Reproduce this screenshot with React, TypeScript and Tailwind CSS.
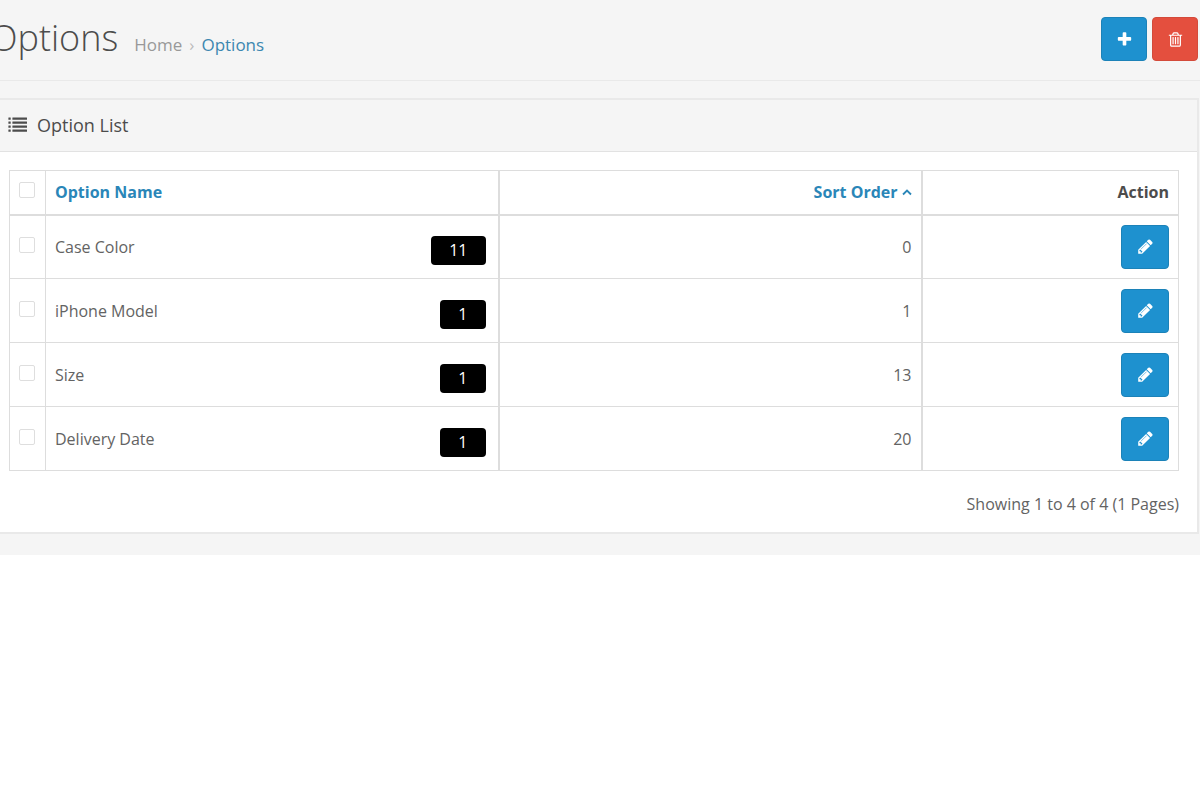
import type { ReactNode } from "react";

const options = [
  { name: "Case Color", values: 11, sortOrder: 0 },
  { name: "iPhone Model", values: 1, sortOrder: 1 },
  { name: "Size", values: 1, sortOrder: 13 },
  { name: "Delivery Date", values: 1, sortOrder: 20 },
];

const icons = {
  plus: "M1600 736v192q0 40-28 68t-68 28h-416v416q0 40-28 68t-68 28h-192q-40 0-68-28t-28-68v-416h-416q-40 0-68-28t-28-68v-192q0-40 28-68t68-28h416v-416q0-40 28-68t68-28h192q40 0 68 28t28 68v416h416q40 0 68 28t28 68z",
  trash:
    "M704 1376v-704q0-14-9-23t-23-9h-64q-14 0-23 9t-9 23v704q0 14 9 23t23 9h64q14 0 23-9t9-23zm256 0v-704q0-14-9-23t-23-9h-64q-14 0-23 9t-9 23v704q0 14 9 23t23 9h64q14 0 23-9t9-23zm256 0v-704q0-14-9-23t-23-9h-64q-14 0-23 9t-9 23v704q0 14 9 23t23 9h64q14 0 23-9t9-23zm128 84v-948h-896v948q0 22 7 40.500t14.500 27 10.500 8.500h832q3 0 10.500-8.500t14.500-27 7-40.500zm-672-1076h448l-48-117q-7-9-17-11h-317q-10 2-17 11zm928 32v64q0 14-9 23t-23 9h-96v948q0 83-47 143.500t-113 60.500h-832q-66 0-113-58.500t-47-141.500v-952h-96q-14 0-23-9t-9-23v-64q0-14 9-23t23-9h309l70-167q15-37 54-63t79-26h320q40 0 79 26t54 63l70 167h309q14 0 23 9t9 23z",
  pencil:
    "M491 1536l91-91-235-235-91 91v107h128v128h107zm523-928q0-22-22-22-10 0-17 7l-542 542q-7 7-7 17 0 22 22 22 10 0 17-7l542-542q7-7 7-17zm-54-192l416 416-832 832h-416v-416zm683 96q0 53-37 90l-166 166-416-416 166-165q36-38 90-38 53 0 91 38l235 234q37 39 37 91z",
};

function Icon({ name, className }: { name: keyof typeof icons; className: string }) {
  return (
    <svg className={className} viewBox="0 0 1792 1792" fill="currentColor" aria-hidden="true">
      <path d={icons[name]} />
    </svg>
  );
}

function ListIcon() {
  return (
    <svg className="w-5 h-4" viewBox="0 0 20 16" fill="currentColor" aria-hidden="true">
      {[0, 4, 8, 12].map((y) => (
        <g key={y}>
          <rect x="0.4" y={y + 0.5} width="2.300" height="2.200" rx="0.3" />
          <rect x="4.400" y={y + 0.5} width="14.600" height="2.200" rx="0.3" />
        </g>
      ))}
    </svg>
  );
}

const buttonStyles = {
  add: "inline-flex w-[46px] h-11 items-center justify-center rounded border border-[#1c82b8] bg-[#1e91cf] text-white",
  edit: "inline-flex w-12 h-11 items-center justify-center rounded border border-[#1c82b8] bg-[#1e91cf] text-white",
  danger: "inline-flex w-[46px] h-11 items-center justify-center rounded border border-[#d34a3a] bg-[#e44f3e] text-white",
};

function Button({ label, kind, children }: { label: string; kind: keyof typeof buttonStyles; children: ReactNode }) {
  return (
    <button type="button" aria-label={label} className={buttonStyles[kind]}>
      {children}
    </button>
  );
}

function Checkbox({ label }: { label: string }) {
  return (
    <input
      type="checkbox"
      aria-label={label}
      className="block ml-[9px] mb-1 size-4 appearance-none rounded-xs border border-[#dedede] bg-white checked:bg-[#1e91cf]"
    />
  );
}

export default function App() {
  return (
    <div className="overflow-hidden bg-[#f5f5f5] pb-[21px] font-['Open_Sans',sans-serif] text-base text-[#636363]">
      <header className="flex h-[81px] items-start justify-between border-b border-[#e9e9e9] pt-[17px] pr-0.5">
        <div className="-ml-2.5 flex items-baseline gap-4">
          <h1 className="text-[36px] leading-[42px] font-light text-[#4c4c4c]">Options</h1>
          <nav aria-label="Breadcrumb" className="flex items-baseline gap-[7px] text-[17px]">
            <a href="#home" className="text-[#999999]">Home</a>
            <span className="text-[#bbbbbb]">›</span>
            <a href="#options" className="text-[#3c87b0]">Options</a>
          </nav>
        </div>
        <div className="flex gap-[5px]">
          <Button label="Add New" kind="add">
            <Icon name="plus" className="size-[17px]" />
          </Button>
          <Button label="Delete" kind="danger">
            <Icon name="trash" className="size-[17px]" />
          </Button>
        </div>
      </header>

      <section className="mt-[17px] mr-px border-y-2 border-r-2 border-[#e9e9e9] bg-white">
        <div className="flex h-[52px] items-center gap-[9px] border-b border-[#e2e2e2] bg-[#f5f5f5] pb-0.5 pl-2 text-[#4c4c4c]">
          <ListIcon />
          <h2 className="text-lg">Option List</h2>
        </div>

        <div className="pt-[18px] pr-[18px] pb-4 pl-[9px]">
          <table className="w-full table-fixed border-collapse border border-[#dddddd]">
            <thead>
              <tr className="h-11 border-b-2 border-[#dddddd]">
                <th className="w-9 border-r border-[#dddddd]">
                  <Checkbox label="Select all" />
                </th>
                <th className="border-r-2 border-[#dddddd] px-[9px] text-left">
                  <a href="#name" className="text-[#2a86b8]">Option Name</a>
                </th>
                <th className="w-[423px] border-r-2 border-[#dddddd] px-[9px] text-right">
                  <a href="#sort" className="inline-flex items-center gap-1 text-[#2a86b8]">
                    Sort Order
                    <svg className="w-2.5 h-2" viewBox="0 0 10 8" fill="none" stroke="currentColor" strokeWidth="1.800" aria-hidden="true">
                      <path d="M1 6.500 5 2.500 9 6.500" />
                    </svg>
                  </a>
                </th>
                <th className="w-[257px] px-[9px] text-right text-[#4c4c4c]">Action</th>
              </tr>
            </thead>
            <tbody>
              {options.map((o) => (
                <tr key={o.name} className="h-16 border-b border-[#dddddd]">
                  <td className="border-r border-[#dddddd]">
                    <Checkbox label={`Select ${o.name}`} />
                  </td>
                  <td className="border-r-2 border-[#dddddd] pr-3 pl-[9px]">
                    <div className="flex items-center justify-between">
                      {o.name}
                      <span className="mt-2 rounded bg-black px-[18px] text-white leading-[29px]">{o.values}</span>
                    </div>
                  </td>
                  <td className="border-r-2 border-[#dddddd] px-[9px] text-right">{o.sortOrder}</td>
                  <td className="px-[9px]">
                    <div className="flex justify-end">
                      <Button label={`Edit ${o.name}`} kind="edit">
                        <Icon name="pencil" className="size-[17px]" />
                      </Button>
                    </div>
                  </td>
                </tr>
              ))}
            </tbody>
          </table>
          <p className="mt-[21px] text-right">Showing 1 to 4 of 4 (1 Pages)</p>
        </div>
      </section>
    </div>
  );
}
